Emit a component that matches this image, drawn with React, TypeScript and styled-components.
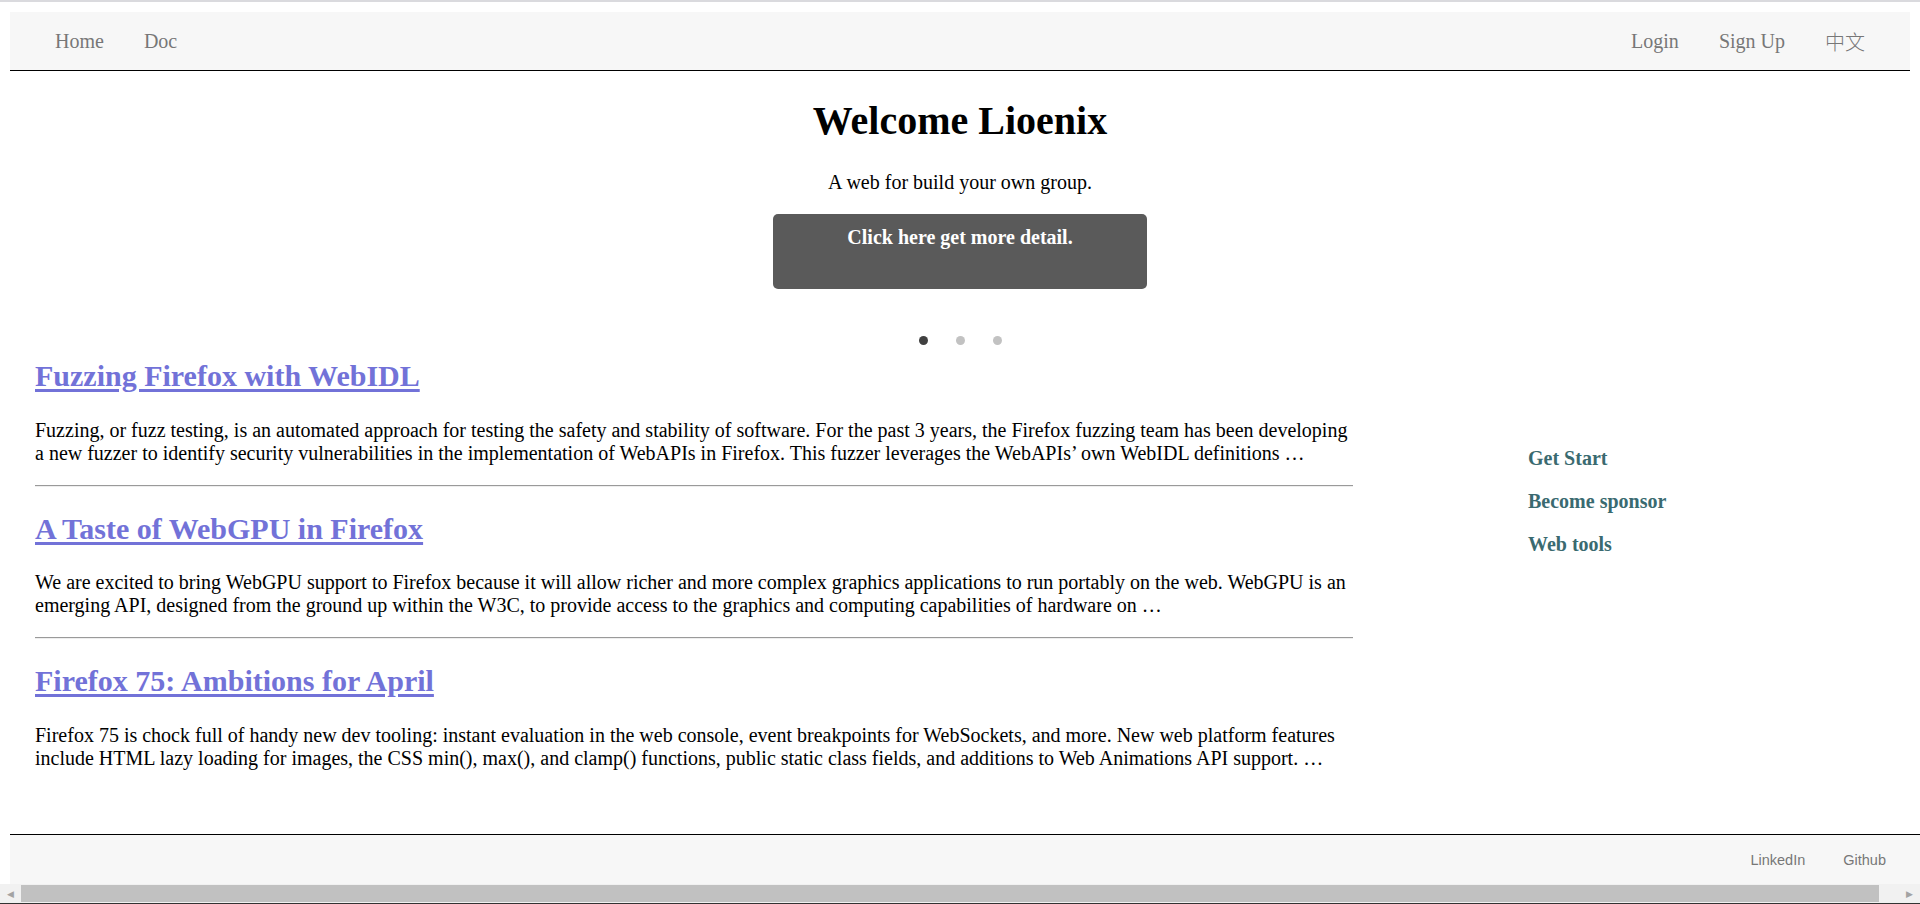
import React, { useState } from 'react';
import styled, { createGlobalStyle } from 'styled-components';

const GlobalStyle = createGlobalStyle`
    html, body {
        margin: 0;
        padding: 0;
        height: 904px;
        overflow: hidden;
    }
    body {
        font-family: "Liberation Serif", "Times New Roman", serif;
        font-size: 20px;
        color: #000;
        background: #fff;
    }
`;

const Page = styled.div`
    border-top: 2px solid #dadade;
    padding-top: 10px;
    height: 892px;
    display: flex;
    flex-direction: column;
`;

const NavBar = styled.nav`
    margin: 0 10px;
    height: 58px;
    background: #f7f7f7;
    border-bottom: 1px solid #000;
    display: flex;
    align-items: center;
    justify-content: space-between;
    padding: 0 25px;
`;

const NavGroup = styled.div`
    display: flex;
    align-items: center;
`;

const NavLink = styled.a<{ $cjk?: boolean }>`
    padding: 0 20px;
    color: #777;
    text-decoration: none;
    line-height: 23px;
    font-family: ${(p) => (p.$cjk ? '"Noto Sans CJK SC", "Liberation Serif", serif' : 'inherit')};
    font-weight: ${(p) => (p.$cjk ? 300 : 400)};
    cursor: pointer;
`;

const Carousel = styled.section`
    position: relative;
    margin: 0 10px;
    text-align: center;
    padding-bottom: 45px;
`;

const Slide = styled.div`
    display: flex;
    flex-direction: column;
    align-items: center;
`;

const Headline = styled.h1`
    font-size: 40px;
    margin: 27px 0;
    line-height: 46px;
`;

const Tagline = styled.p`
    margin: 0 0 20px;
    line-height: 23px;
`;

const DetailButton = styled.a`
    box-sizing: border-box;
    width: 374px;
    height: 75px;
    padding-top: 12px;
    background: #5a5a5a;
    border-radius: 5px;
    color: #fff;
    font-weight: bold;
    line-height: 23px;
    text-decoration: none;
    cursor: pointer;
`;

const Dots = styled.ul`
    position: absolute;
    left: 0;
    right: 0;
    bottom: -11px;
    margin: 0;
    padding: 0;
    list-style: none;
    display: flex;
    justify-content: center;
    gap: 28px;
`;

const Dot = styled.li<{ $active: boolean }>`
    width: 9px;
    height: 9px;
    border-radius: 50%;
    background: ${(p) => (p.$active ? '#404040' : '#c2c2c2')};
    cursor: pointer;
`;

const Main = styled.main`
    display: grid;
    grid-template-columns: 1318px 1fr;
    padding: 0 35px;
`;

const Articles = styled.div`
    display: flow-root;
`;

const ArticleTitle = styled.h2`
    font-size: 30px;
    line-height: 34.5px;
    margin: 25px 0;
    a {
        color: #7272d8;
        text-decoration: underline;
        text-decoration-thickness: 3px;
        text-underline-offset: 3px;
    }
`;

const Excerpt = styled.p`
    margin: 20px 0;
    line-height: 23px;
`;

const Divider = styled.hr`
    margin: 8px 0;
    border: 0;
    border-top: 1px solid #9a9a9a;
    border-bottom: 1px solid #eee;
    height: 0;
`;

const Sidebar = styled.aside`
    display: flow-root;
    padding: 93px 0 0 175px;
`;

const SideLink = styled.p`
    margin: 20px 0;
    line-height: 23px;
    font-weight: bold;
    color: #3a6a70;
    cursor: pointer;
`;

const Footer = styled.footer`
    margin: auto 0 0 10px;
    height: 49px;
    background: #f7f7f7;
    border-top: 1px solid #000;
    display: flex;
    align-items: center;
    justify-content: flex-end;
    padding-right: 15px;
    font-family: "Liberation Sans", Arial, sans-serif;
    font-size: 14.5px;
`;

const FooterLink = styled.a`
    padding: 0 19px;
    color: #777;
    text-decoration: none;
`;

const ScrollBar = styled.div`
    height: 20px;
    background: #f1f1f1;
    border-bottom: 1px solid #333;
    box-sizing: border-box;
    display: flex;
    align-items: center;
`;

const ScrollArrow = styled.span`
    width: 21px;
    display: flex;
    justify-content: center;
    color: #a3a3a3;
    font-family: "DejaVu Sans", sans-serif;
    font-size: 9px;
`;

const ScrollThumb = styled.div`
    flex: 1;
    height: 17px;
    margin-right: 20px;
    background: #c1c1c1;
`;

const articles = [
    {
        title: 'Fuzzing Firefox with WebIDL',
        excerpt:
            'Fuzzing, or fuzz testing, is an automated approach for testing the safety and stability of software. For the past 3 years, the Firefox fuzzing team has been developing a new fuzzer to identify security vulnerabilities in the implementation of WebAPIs in Firefox. This fuzzer leverages the WebAPIs\u2019 own WebIDL definitions \u2026',
    },
    {
        title: 'A Taste of WebGPU in Firefox',
        excerpt:
            'We are excited to bring WebGPU support to Firefox because it will allow richer and more complex graphics applications to run portably on the web. WebGPU is an emerging API, designed from the ground up within the W3C, to provide access to the graphics and computing capabilities of hardware on \u2026',
    },
    {
        title: 'Firefox 75: Ambitions for April',
        excerpt:
            'Firefox 75 is chock full of handy new dev tooling: instant evaluation in the web console, event breakpoints for WebSockets, and more. New web platform features include HTML lazy loading for images, the CSS min(), max(), and clamp() functions, public static class fields, and additions to Web Animations API support. \u2026',
    },
];

const App: React.FC = () => {
    const [slide, setSlide] = useState(0);

    return <>
        <GlobalStyle />
        <Page>
            <NavBar>
                <NavGroup>
                    <NavLink>Home</NavLink>
                    <NavLink>Doc</NavLink>
                </NavGroup>
                <NavGroup>
                    <NavLink>Login</NavLink>
                    <NavLink>Sign Up</NavLink>
                    <NavLink $cjk>中文</NavLink>
                </NavGroup>
            </NavBar>
            <Carousel>
                <Slide>
                    <Headline>Welcome Lioenix</Headline>
                    <Tagline>A web for build your own group.</Tagline>
                    <DetailButton>Click here get more detail.</DetailButton>
                </Slide>
                <Dots>
                    {[0, 1, 2].map((i) => <Dot key={i} $active={i === slide} onClick={() => setSlide(i)} />)}
                </Dots>
            </Carousel>
            <Main>
                <Articles>
                    {articles.map((a, i) => <React.Fragment key={a.title}>
                        {i > 0 && <Divider />}
                        <ArticleTitle><a href="#">{a.title}</a></ArticleTitle>
                        <Excerpt>{a.excerpt}</Excerpt>
                    </React.Fragment>)}
                </Articles>
                <Sidebar>
                    <SideLink>Get Start</SideLink>
                    <SideLink>Become sponsor</SideLink>
                    <SideLink>Web tools</SideLink>
                </Sidebar>
            </Main>
            <Footer>
                <FooterLink>LinkedIn</FooterLink>
                <FooterLink>Github</FooterLink>
            </Footer>
            <ScrollBar>
                <ScrollArrow>◀</ScrollArrow>
                <ScrollThumb />
                <ScrollArrow>▶</ScrollArrow>
            </ScrollBar>
        </Page>
    </>;
};

export default App;
